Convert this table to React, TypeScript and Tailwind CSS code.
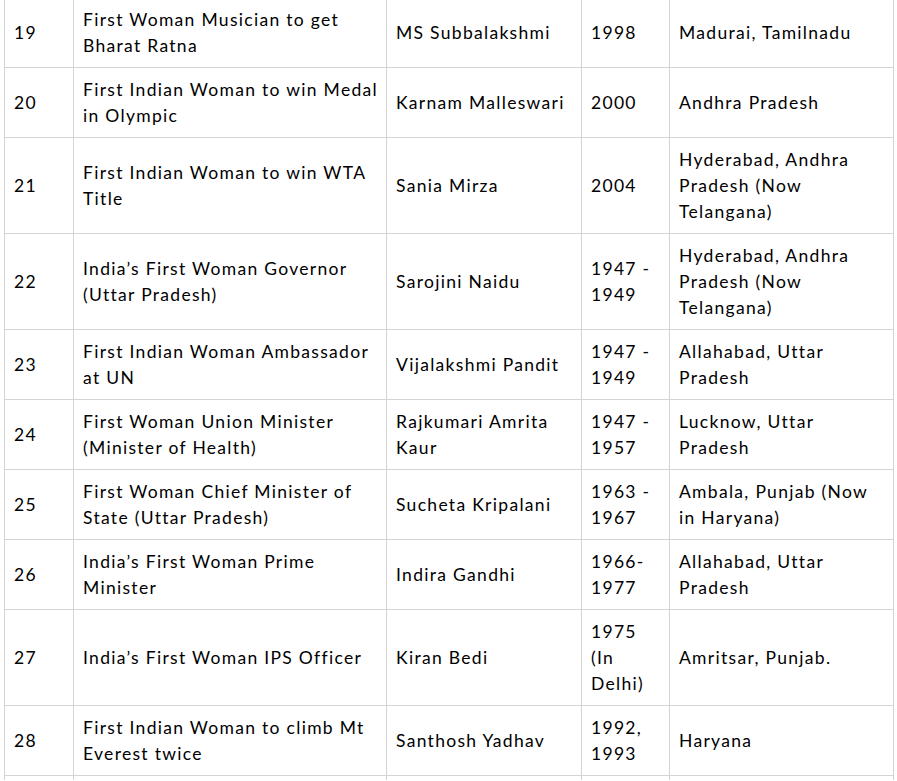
type Row = {
  no: number;
  title: string[];
  name: string[];
  year: string[];
  place: string[];
};

const rows: Row[] = [
  { no: 19, title: ['First Woman Musician to get', 'Bharat Ratna'], name: ['MS Subbalakshmi'], year: ['1998'], place: ['Madurai, Tamilnadu'] },
  { no: 20, title: ['First Indian Woman to win Medal', 'in Olympic'], name: ['Karnam Malleswari'], year: ['2000'], place: ['Andhra Pradesh'] },
  { no: 21, title: ['First Indian Woman to win WTA', 'Title'], name: ['Sania Mirza'], year: ['2004'], place: ['Hyderabad, Andhra', 'Pradesh (Now', 'Telangana)'] },
  { no: 22, title: ['India\u2019s First Woman Governor', '(Uttar Pradesh)'], name: ['Sarojini Naidu'], year: ['1947 -', '1949'], place: ['Hyderabad, Andhra', 'Pradesh (Now', 'Telangana)'] },
  { no: 23, title: ['First Indian Woman Ambassador', 'at UN'], name: ['Vijalakshmi Pandit'], year: ['1947 -', '1949'], place: ['Allahabad, Uttar', 'Pradesh'] },
  { no: 24, title: ['First Woman Union Minister', '(Minister of Health)'], name: ['Rajkumari Amrita', 'Kaur'], year: ['1947 -', '1957'], place: ['Lucknow, Uttar', 'Pradesh'] },
  { no: 25, title: ['First Woman Chief Minister of', 'State (Uttar Pradesh)'], name: ['Sucheta Kripalani'], year: ['1963 -', '1967'], place: ['Ambala, Punjab (Now', 'in Haryana)'] },
  { no: 26, title: ['India\u2019s First Woman Prime', 'Minister'], name: ['Indira Gandhi'], year: ['1966-', '1977'], place: ['Allahabad, Uttar', 'Pradesh'] },
  { no: 27, title: ['India\u2019s First Woman IPS Officer'], name: ['Kiran Bedi'], year: ['1975', '(In', 'Delhi)'], place: ['Amritsar, Punjab.'] },
  { no: 28, title: ['First Indian Woman to climb Mt', 'Everest twice'], name: ['Santhosh Yadhav'], year: ['1992,', '1993'], place: ['Haryana'] },
];

const cell = 'border border-[#d4d4d4] pl-[9px] pr-[2px] pt-[9px] pb-[8px] align-middle whitespace-nowrap';
const stub = 'border-x border-t border-[#d4d4d4] p-0';

function Lines({ items }: { items: string[] }) {
  return (
    <>
      {items.map((t, i) => (
        <div key={i}>{t}</div>
      ))}
    </>
  );
}

export default function App() {
  return (
    <div className="bg-white overflow-hidden">
      <table
        className="ml-[4px] -mt-[3px] border-collapse table-fixed text-black text-[17.5px] leading-[26px] tracking-[1.3px]"
        style={{ fontFamily: 'Lato, "Open Sans", sans-serif', width: 889 }}
      >
        <colgroup>
          <col className="w-[69px]" />
          <col className="w-[313px]" />
          <col className="w-[195px]" />
          <col className="w-[88px]" />
          <col className="w-[224px]" />
        </colgroup>
        <tbody>
          {rows.map((r) => (
            <tr key={r.no}>
              <td className={cell}>{r.no}</td>
              <td className={cell}><Lines items={r.title} /></td>
              <td className={cell}><Lines items={r.name} /></td>
              <td className={cell}><Lines items={r.year} /></td>
              <td className={cell}><Lines items={r.place} /></td>
            </tr>
          ))}
          {/* top of the next row, cut off by the window */}
          <tr className="h-[4px]">
            <td className={stub} />
            <td className={stub} />
            <td className={stub} />
            <td className={stub} />
            <td className={stub} />
          </tr>
        </tbody>
      </table>
    </div>
  );
}
